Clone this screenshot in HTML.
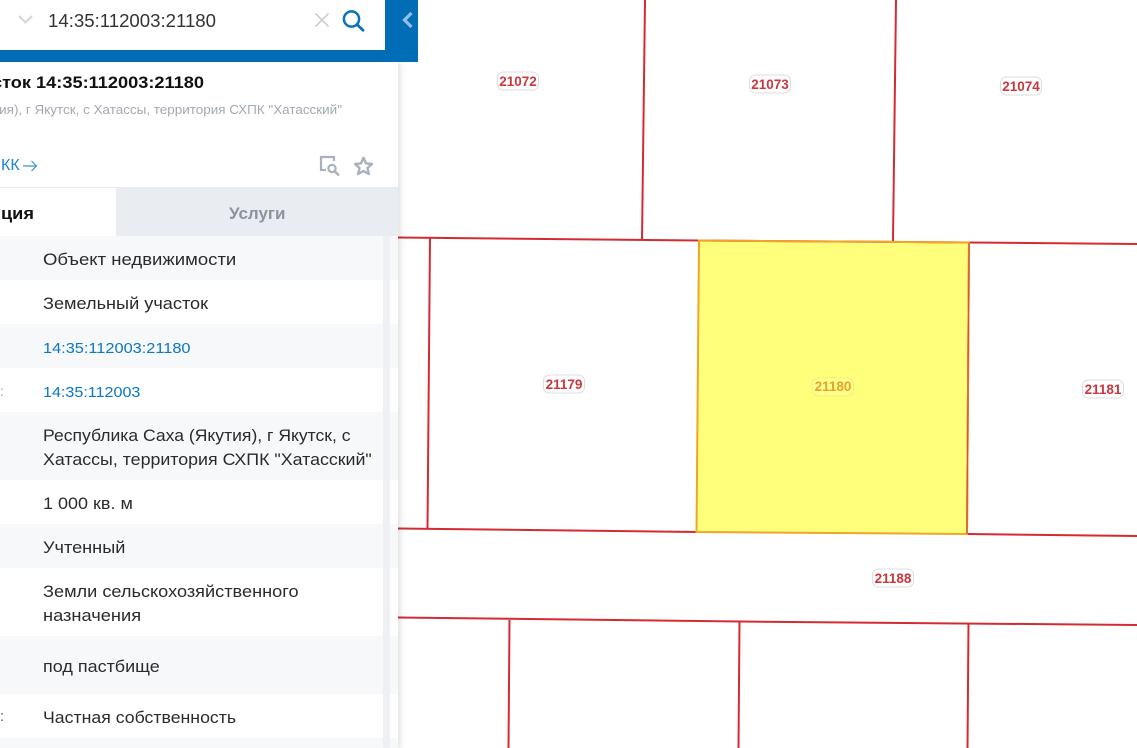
<!DOCTYPE html>
<html lang="ru">
<head>
<meta charset="utf-8">
<style>
html,body{margin:0;padding:0;width:1137px;height:748px;overflow:hidden;background:#fff;font-family:"Liberation Sans","Noto Sans CJK SC",sans-serif}
.a{position:absolute;white-space:nowrap}
#map{position:absolute;left:0;top:0}
.panel{position:absolute;left:0;top:62px;width:398px;height:686px;background:#fff;box-shadow:2px 0 6px rgba(0,0,0,.14)}
.bar{position:absolute;left:0;top:0;width:418px;height:62px;background:#016db6}
.search{position:absolute;left:0;top:0;width:385px;height:50px;background:#fff}
.row{position:absolute;left:0;width:398px}
.g{background:#f7f8fa}
.t{position:absolute;left:43px;font-size:17px;line-height:24px;color:#2b2b2b;white-space:nowrap;transform-origin:0 50%}
.l{color:#0a78c2;font-size:15.2px}
.sb{position:absolute;left:383px;top:236px;width:7px;height:512px;background:#eef0f4}
.s{transform-origin:0 50%}
</style>
</head>
<body>
<svg id="map" width="1137" height="748" viewBox="0 0 1137 748" xmlns="http://www.w3.org/2000/svg">
<polygon points="699,240.5 969,242.5 967,534 696.5,532" fill="#ffff7b"/>
<g stroke="#d42b33" stroke-width="2" fill="none">
<path d="M398 237.5L699 240.5L969 242.5L1137 244"/>
<path d="M645 0L642 240"/>
<path d="M896 0L893 241.5"/>
<path d="M430 238L427.5 529"/>
<path d="M398 528.5L696.5 532"/>
<path d="M967 534L1137 536"/>
<path d="M398 617.5L740 621.5L1137 625"/>
<path d="M509.5 620L508.5 748"/>
<path d="M739.5 621L738.5 748"/>
<path d="M968.5 624L967.5 748"/>
<path d="M969 242.5L967 534"/>
</g>
<polygon points="699,240.5 969,242.5 967,534 696.5,532" fill="none" stroke="#f0a428" stroke-width="2"/>
<path d="M969 242.5L967 534" stroke="#d6503a" stroke-width="1.2" fill="none"/>
<g font-family="Liberation Sans, sans-serif" font-size="13.5" font-weight="bold" text-anchor="middle">
<g fill="#fff" stroke="#dcdcdc" stroke-width="1">
<rect x="497.5" y="72" width="41" height="18" rx="6"/>
<rect x="749.5" y="75" width="41" height="18" rx="6"/>
<rect x="1000.5" y="77" width="41" height="18" rx="6"/>
<rect x="543.5" y="375" width="41" height="18" rx="6"/>
<rect x="1082.5" y="380" width="41" height="18" rx="6"/>
<rect x="872.5" y="569" width="41" height="18" rx="6"/>
</g>
<rect x="812.5" y="378" width="41" height="18" rx="6" fill="#ffff8c" stroke="#f3ef7c"/>
<g fill="#c9383f">
<text x="518" y="86">21072</text>
<text x="770" y="89">21073</text>
<text x="1021" y="91">21074</text>
<text x="564" y="389">21179</text>
<text x="1103" y="394">21181</text>
<text x="893" y="583">21188</text>
</g>
<text x="833" y="391" fill="#e8a12c">21180</text>
</g>
</svg>

<div class="panel"></div>

<div class="row" style="top:187px;height:1px;background:#e8eaee"></div>
<div class="a" style="left:116px;top:188px;width:282px;height:48px;background:#e9ecf1"></div>

<div class="row g" style="top:236px;height:44px"></div>
<div class="row g" style="top:324px;height:44px"></div>
<div class="row g" style="top:412px;height:68px"></div>
<div class="row g" style="top:524px;height:44px"></div>
<div class="row g" style="top:636px;height:58px"></div>
<div class="row g" style="top:738px;height:10px"></div>
<div class="sb"></div>

<div class="bar"></div>
<div class="search"></div>

<svg class="a" style="left:17px;top:14px" width="18" height="12" viewBox="0 0 18 12"><path d="M2 2L8.5 8.5L15 2" fill="none" stroke="#d3d6db" stroke-width="2.2"/></svg>
<div class="a s" style="left:48px;top:8px;font-size:18.4px;line-height:26px;color:#333;transform:scaleX(1.012)">14:35:112003:21180</div>
<svg class="a" style="left:314px;top:12px" width="16" height="16" viewBox="0 0 16 16"><path d="M1.5 1.5L14.5 14.5M14.5 1.5L1.5 14.5" stroke="#cfcfcf" stroke-width="1.8" fill="none"/></svg>
<svg class="a" style="left:341px;top:9px" width="24" height="24" viewBox="0 0 24 24"><circle cx="10.5" cy="10" r="7.6" fill="none" stroke="#0a72b9" stroke-width="2.5"/><path d="M16 15.5L22 21.3" stroke="#0a72b9" stroke-width="2.8" stroke-linecap="round"/></svg>
<svg class="a" style="left:401px;top:11px" width="14" height="18" viewBox="0 0 14 18"><path d="M10.5 2L3.5 9L10.5 16" fill="none" stroke="#8fc0e3" stroke-width="3.2"/></svg>

<div class="a s" style="left:-8px;top:71px;font-size:17px;line-height:24px;font-weight:bold;color:#111;transform:scaleX(1.07)">сток 14:35:112003:21180</div>
<div class="a s" style="left:-7px;top:101px;font-size:12.7px;line-height:18px;color:#a3a8b1;transform:scaleX(1.06)">тия), г Якутск, с Хатассы, территория СХПК "Хатасский"</div>
<div class="a" style="left:1px;top:155px;font-size:16px;line-height:22px;color:#1f85c9">КК</div>
<svg class="a" style="left:22px;top:158px" width="16" height="16" viewBox="0 0 16 16"><path d="M1 8H14.5M9.5 3L14.5 8L9.5 13" fill="none" stroke="#3c94d2" stroke-width="1.2"/></svg>

<svg class="a" style="left:319px;top:155px" width="22" height="22" viewBox="0 0 22 22"><path d="M7 15H2V2H15V6" fill="none" stroke="#a9b1bd" stroke-width="2.2"/><circle cx="13" cy="13.5" r="3.6" fill="none" stroke="#a9b1bd" stroke-width="2.2"/><path d="M15.8 16.3L20 20.5" stroke="#a9b1bd" stroke-width="2.4"/></svg>
<svg class="a" style="left:353px;top:156px" width="21" height="20" viewBox="0 0 21 20"><path d="M10.5 1.8L13 7.4L19 8L14.5 12L15.9 18L10.5 14.9L5.1 18L6.5 12L2 8L8 7.4Z" fill="none" stroke="#a9b1bd" stroke-width="2.4" stroke-linejoin="round"/></svg>

<div class="a s" style="left:1px;top:202px;font-size:17px;line-height:24px;font-weight:bold;color:#111;transform:scaleX(1.07)">ция</div>
<div class="a s" style="left:229px;top:202px;font-size:16.4px;line-height:24px;font-weight:bold;color:#8c939e;transform:scaleX(1.035)">Услуги</div>

<div class="t" style="top:248px;transform:scaleX(1.09)">Объект недвижимости</div>
<div class="t" style="top:292px;transform:scaleX(1.067)">Земельный участок</div>
<div class="t l" style="top:337px;transform:scaleX(1.076)">14:35:112003:21180</div>
<div class="t l" style="top:381px;transform:scaleX(1.061)">14:35:112003</div>
<div class="t" style="top:424px;transform:scaleX(1.033)">Республика Саха (Якутия), г Якутск, с</div>
<div class="t" style="top:448px;transform:scaleX(1.047)">Хатассы, территория СХПК "Хатасский"</div>
<div class="t" style="top:492px;transform:scaleX(1.059)">1 000 кв. м</div>
<div class="t" style="top:536px;transform:scaleX(1.067)">Учтенный</div>
<div class="t" style="top:580px;transform:scaleX(1.068)">Земли сельскохозяйственного</div>
<div class="t" style="top:604px;transform:scaleX(1.074)">назначения</div>
<div class="t" style="top:655px;transform:scaleX(1.058)">под пастбище</div>
<div class="t" style="top:706px;transform:scaleX(1.041)">Частная собственность</div>
<div class="a" style="left:0;top:382px;font-size:14px;line-height:18px;color:#999">:</div>
<div class="a" style="left:0;top:707px;font-size:15px;line-height:20px;color:#555">:</div>
</body>
</html>
